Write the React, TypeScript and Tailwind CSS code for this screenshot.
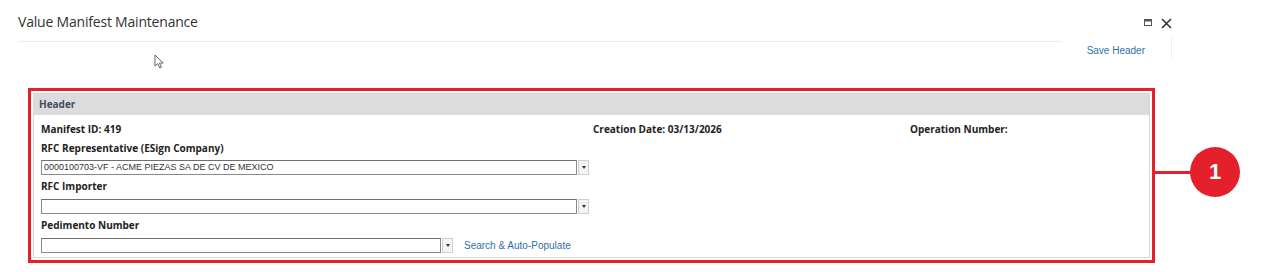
import React from "react";

function Select({ width, value }: { width: number; value?: string }) {
  return (
    <div className="flex items-stretch h-[15px]" style={{ width }}>
      <div className="flex-1 border border-[#8a8a8a] border-t-[#6f6f6f] bg-white flex items-center pl-[2px] text-[9px] leading-none text-[#333] font-['Liberation_Sans',sans-serif] overflow-hidden whitespace-nowrap">
        {value}
      </div>
      <div className="w-[11px] ml-[1px] border border-[#cfcfcf] bg-[#f4f4f4] flex items-center justify-center">
        <span className="block w-0 h-0 border-l-[2px] border-r-[2px] border-t-[3px] border-l-transparent border-r-transparent border-t-[#333]" />
      </div>
    </div>
  );
}

export default function App() {
  const label = "text-[10px] leading-none font-bold text-[#222] font-['Open_Sans',sans-serif]";
  return (
    <div className="relative w-[1280px] h-[272px] bg-white overflow-hidden font-['Open_Sans',sans-serif]">
      {/* Title bar */}
      <div className="flex items-start pl-[18px] pt-[13px]">
        <div className="w-[1044px]">
          <div className="text-[14px] leading-[18px] text-[#333] tracking-[-0.2px] h-[28px]">
            Value Manifest Maintenance
          </div>
          <div className="h-px bg-[#ececec]" />
        </div>
        <div className="flex-1 flex flex-col items-end pr-[108px]">
          <div className="flex items-center gap-[9px] h-[18px] mt-[1px]">
            <svg width="8" height="8" viewBox="0 0 8 8">
              <rect x="0.5" y="0.5" width="7" height="6" fill="none" stroke="#555" strokeWidth="1" />
              <rect x="0.5" y="0.5" width="7" height="2" fill="#555" />
            </svg>
            <svg width="11" height="11" viewBox="0 0 11 11">
              <path d="M1 1 L10 10 M10 1 L1 10" stroke="#333" strokeWidth="1.6" />
            </svg>
          </div>
          <div className="flex items-start mt-[14px]">
            <span className="text-[10px] leading-none text-[#2f6fa8] font-['Liberation_Sans',sans-serif] mr-[26px]">
              Save Header
            </span>
            <div className="w-px h-[22px] bg-[#f0f0f0] -mt-[10px]" />
          </div>
        </div>
      </div>

      {/* Cursor */}
      <svg className="absolute left-[154px] top-[54px]" width="11" height="15" viewBox="0 0 11 15">
        <path d="M1 1 L1 12 L3.8 9.6 L5.8 14 L7.4 13.3 L5.5 9 L9.2 9 Z" fill="#fff" stroke="#555" strokeWidth="0.9" strokeLinejoin="round" />
      </svg>

      {/* Red highlighted section */}
      <div className="ml-[28px] mt-[30px] w-[1127px] h-[175px] border-[3px] border-[#e4202c] p-[2px]">
        <div className="h-full border border-[#d6d6d6] bg-white flex flex-col">
          <div className="h-[21px] bg-[#dcdcdc] flex items-center pl-[5px] text-[10px] font-bold text-[#3d4f63] font-['Open_Sans',sans-serif]">
            Header
          </div>
          <div className="pl-[7px] pt-[8px] flex flex-col">
            <div className="flex h-[11px] items-center">
              <div className={`${label} w-[552px]`}>Manifest ID: 419</div>
              <div className={`${label} w-[317px]`}>Creation Date: 03/13/2026</div>
              <div className={label}>Operation Number:</div>
            </div>
            <div className={`${label} mt-[8px] h-[11px] flex items-center`}>RFC Representative (ESign Company)</div>
            <div className="mt-[7px]">
              <Select width={548} value="0000100703-VF - ACME PIEZAS SA DE CV DE MEXICO" />
            </div>
            <div className={`${label} mt-[5px] h-[11px] flex items-center`}>RFC Importer</div>
            <div className="mt-[8px]">
              <Select width={548} />
            </div>
            <div className={`${label} mt-[5px] h-[11px] flex items-center`}>Pedimento Number</div>
            <div className="mt-[8px] flex items-center">
              <Select width={412} />
              <span className="ml-[11px] text-[10px] leading-none text-[#2f6fa8] font-['Liberation_Sans',sans-serif]">
                Search &amp; Auto-Populate
              </span>
            </div>
          </div>
        </div>
      </div>

      {/* Callout */}
      <div className="absolute left-[1154px] top-[171px] w-[40px] h-[3px] bg-[#e4202c]" />
      <div className="absolute left-[1190px] top-[147px] w-[50px] h-[50px] rounded-full bg-[#e4202c] flex items-center justify-center">
        <span className="text-white text-[22px] font-bold leading-none font-['Liberation_Sans',sans-serif]">1</span>
      </div>
    </div>
  );
}
